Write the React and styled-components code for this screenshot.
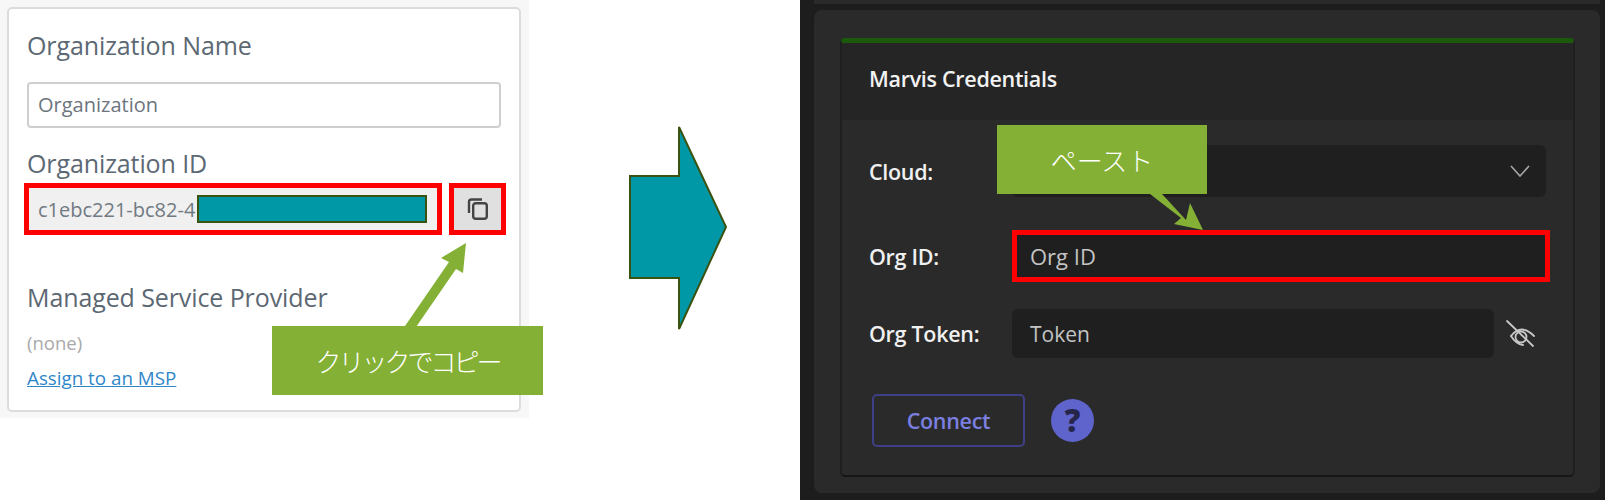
import React from "react";
import styled, { createGlobalStyle } from "styled-components";

const Global = createGlobalStyle`
  html, body {
    margin: 0;
    background: #fff;
    overflow: hidden;
  }
  * {
    box-sizing: border-box;
  }
`;

const Page = styled.div`
  position: relative;
  display: flex;
  width: 1605px;
  height: 500px;
  font-family: "Open Sans", sans-serif;
`;

const LeftPanel = styled.div`
  flex: none;
  width: 529px;
  height: 418px;
  padding: 7px 8px 6px 7px;
  background: #f7f7f7;
`;

const Card = styled.div`
  height: 100%;
  padding: 21px 18px 0;
  background: #fff;
  border: 2px solid #dcdcdc;
  border-radius: 5px;
`;

const Heading = styled.div`
  height: 30px;
  margin-top: ${(p) => p.$top || 0}px;
  font-size: 25px;
  line-height: 30px;
  letter-spacing: -0.1px;
  color: #5c6873;
`;

const TextInput = styled.div`
  width: 474px;
  height: 46px;
  margin-top: 22px;
  padding-left: 9px;
  border: 2px solid #cfcfcf;
  border-radius: 4px;
  font-size: 20px;
  line-height: 42px;
  color: #6c757d;
`;

const IdRow = styled.div`
  display: flex;
  gap: 7px;
  margin: 5px 0 0 -3px;
`;

const RedFrame = styled.div`
  flex: none;
  display: flex;
  align-items: center;
  width: ${(p) => p.$width}px;
  height: 52px;
  border: 5px solid #ff0000;
  background: ${(p) => p.$fill};
`;

const IdValue = styled.span`
  width: 168px;
  padding-left: 9px;
  font-size: 20px;
  color: #717a82;
  white-space: nowrap;
`;

const Masked = styled.div`
  flex: none;
  width: 230px;
  height: 28px;
  background: #0097a7;
  border: 2px solid #3a5311;
`;

const CopyButton = styled(RedFrame)`
  justify-content: center;
`;

const CopyIcon = styled.svg`
  width: 21px;
  height: 22px;
`;

const NoneText = styled.div`
  height: 24px;
  margin-top: 19px;
  font-size: 18.5px;
  line-height: 24px;
  color: #a9a9a9;
`;

const MspLink = styled.a`
  display: block;
  height: 24px;
  margin-top: 11px;
  font-size: 18.8px;
  line-height: 24px;
  color: #2f86c9;
  text-decoration: underline;
`;

const BigArrow = styled.svg`
  flex: none;
  width: 100px;
  height: 207px;
  margin: 124px 0 0 100px;
`;

const DarkPanel = styled.div`
  flex: none;
  width: 805px;
  height: 500px;
  margin-left: 71px;
  padding-left: 14px;
  background: #1d1d1d;
`;

const TopStrip = styled.div`
  width: 786px;
  height: 4px;
  background: #2a2a2a;
`;

const InnerPanel = styled.div`
  width: 786px;
  height: 483px;
  margin-top: 6px;
  padding: 28px 25px 0 26px;
  background: #2a2a2a;
  border-radius: 8px;
`;

const CredCard = styled.div`
  height: 439px;
  border-top: 5px solid #1a5a0a;
  border-left: 2px solid #1f1f1f;
  border-right: 2px solid #1f1f1f;
  border-bottom: 2px solid #161616;
  border-radius: 5px;
`;

const CardHeader = styled.div`
  height: 77px;
  padding-left: 27px;
  background: #252525;
  font-size: 21.5px;
  font-weight: 600;
  line-height: 72px;
  letter-spacing: -0.3px;
  color: #f2f2f2;
`;

const CardBody = styled.div`
  padding: 25px 0 0 27px;
`;

const FormRow = styled.div`
  display: flex;
  align-items: center;
  margin-top: ${(p) => p.$top || 0}px;
`;

const FormLabel = styled.div`
  flex: none;
  width: 143px;
  font-size: 21.5px;
  font-weight: 600;
  letter-spacing: -0.3px;
  color: #f0f0f0;
`;

const Field = styled.div`
  flex: none;
  display: flex;
  align-items: center;
  justify-content: ${(p) => (p.$select ? "flex-end" : "flex-start")};
  width: ${(p) => p.$width}px;
  height: ${(p) => p.$height}px;
  padding: 0 ${(p) => (p.$select ? 16 : 18)}px;
  background: #1f1f1f;
  border-radius: 6px;
  font-size: 21px;
  color: #c4c4c4;
`;

const ChevronIcon = styled.svg`
  width: 20px;
  height: 12px;
  color: #a8a8a8;
`;

const FramedText = styled.span`
  padding-left: 13px;
  font-size: 22px;
  color: #c4c4c4;
`;

const EyeIcon = styled.svg`
  flex: none;
  width: 30px;
  height: 30px;
  margin-left: 11px;
  color: #c8c8c8;
`;

const ActionRow = styled.div`
  display: flex;
  align-items: center;
  gap: 26px;
  margin: 36px 0 0 3px;
`;

const ConnectButton = styled.button`
  width: 153px;
  height: 53px;
  background: transparent;
  border: 2px solid #3e3f86;
  border-radius: 5px;
  font-family: inherit;
  font-size: 21.5px;
  font-weight: 600;
  letter-spacing: -0.3px;
  color: #7b7fe0;
`;

const HelpBadge = styled.div`
  width: 43px;
  height: 43px;
  border-radius: 50%;
  background: #5f63cc;
  font-size: 31px;
  font-weight: 800;
  line-height: 43px;
  text-align: center;
  color: #26264a;
`;

const Callout = styled.div`
  position: absolute;
  left: ${(p) => p.$left}px;
  top: ${(p) => p.$top}px;
  width: ${(p) => p.$width}px;
  height: 69px;
  background: #84b135;
  color: #fff;
  font-family: "Noto Sans CJK JP", sans-serif;
  font-size: 26px;
  font-weight: 300;
  line-height: 69px;
  text-align: center;
  letter-spacing: ${(p) => p.$spacing}px;
`;

const Pointer = styled.svg`
  position: absolute;
  left: 0;
  top: 0;
  width: 1605px;
  height: 500px;
  pointer-events: none;
`;

export default function App() {
  return (
    <Page>
      <Global />
      <LeftPanel>
        <Card>
          <Heading>Organization Name</Heading>
          <TextInput>Organization</TextInput>
          <Heading $top={20}>Organization ID</Heading>
          <IdRow>
            <RedFrame $width={418} $fill="#f0f0f0">
              <IdValue>c1ebc221-bc82-4</IdValue>
              <Masked />
            </RedFrame>
            <CopyButton $width={57} $fill="#e0e0e0">
              <CopyIcon viewBox="0 0 21 22" fill="none" stroke="#444" strokeWidth="2.4">
                <rect x="6.2" y="5.2" width="13.6" height="15.6" rx="2.5" />
                <path d="M2 15 V4 Q2 1.5 4.5 1.5 H15" />
              </CopyIcon>
            </CopyButton>
          </IdRow>
          <Heading $top={47}>Managed Service Provider</Heading>
          <NoneText>(none)</NoneText>
          <MspLink>Assign to an MSP</MspLink>
        </Card>
      </LeftPanel>

      <BigArrow viewBox="0 0 100 207">
        <path
          d="M1 52 H50 V3 L97 103 L50 205 V154 H1 Z"
          fill="#0097a7"
          stroke="#3a5311"
          strokeWidth="2"
        />
      </BigArrow>

      <DarkPanel>
        <TopStrip />
        <InnerPanel>
          <CredCard>
            <CardHeader>Marvis Credentials</CardHeader>
            <CardBody>
              <FormRow>
                <FormLabel>Cloud:</FormLabel>
                <Field $select $width={534} $height={52}>
                  <ChevronIcon viewBox="0 0 20 12" fill="none" stroke="currentColor" strokeWidth="1.6">
                    <path d="M1 1 L10 11 L19 1" />
                  </ChevronIcon>
                </Field>
              </FormRow>
              <FormRow $top={33}>
                <FormLabel>Org ID:</FormLabel>
                <RedFrame $width={538} $fill="#1f1f1f">
                  <FramedText>Org ID</FramedText>
                </RedFrame>
              </FormRow>
              <FormRow $top={27}>
                <FormLabel>Org Token:</FormLabel>
                <Field $width={482} $height={49}>
                  Token
                </Field>
                <EyeIcon viewBox="15 13 30 30" fill="none" stroke="currentColor" strokeWidth="1.8" strokeLinecap="round">
                  <path d="M17 15 L43 40" />
                  <path d="M21 30 Q31 17 44 30" />
                  <path d="M21 30 Q26 38 33 39" />
                  <circle cx="31" cy="31" r="5.5" />
                </EyeIcon>
              </FormRow>
              <ActionRow>
                <ConnectButton>Connect</ConnectButton>
                <HelpBadge>?</HelpBadge>
              </ActionRow>
            </CardBody>
          </CredCard>
        </InnerPanel>
      </DarkPanel>

      <Pointer viewBox="0 0 1605 500">
        <path d="M405 326 L449 262 L441 258 L466 243 L463 273 L456 269 L414 330 Z" fill="#84b135" />
        <path d="M1150 194 L1162 194 L1186 220 L1190 203 L1203 230 L1174 224 L1181 218 Z" fill="#84b135" />
      </Pointer>
      <Callout $left={272} $top={326} $width={271} $spacing={-3}>
        クリックでコピー
      </Callout>
      <Callout $left={997} $top={125} $width={210} $spacing={0}>
        ペースト
      </Callout>
    </Page>
  );
}
